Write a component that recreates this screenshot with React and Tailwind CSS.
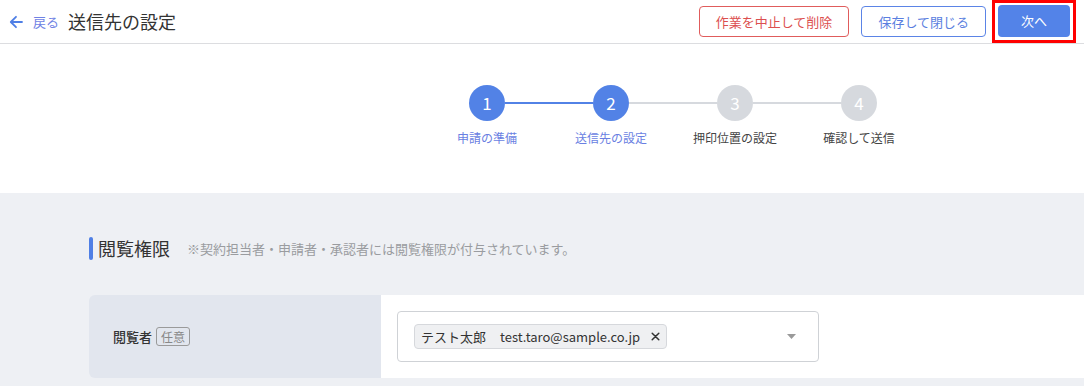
const steps = [
  { n: 1, label: "申請の準備", done: true },
  { n: 2, label: "送信先の設定", done: true },
  { n: 3, label: "押印位置の設定", done: false },
  { n: 4, label: "確認して送信", done: false },
];

function Header() {
  return (
    <header className="h-[44px] flex items-center justify-between border-b border-[#dcdde0] bg-white">
      <div className="flex items-center pl-[9px]">
        <svg width="14" height="14" viewBox="0 0 14 14" fill="none" className="mr-[10px]">
          <path d="M13 7H2M7 1.8L1.8 7 7 12.2" stroke="#4f7fe5" strokeWidth="1.8" strokeLinecap="round" strokeLinejoin="round" />
        </svg>
        <span className="text-[13px] text-[#6f82e4] mr-[9px]">戻る</span>
        <h1 className="text-[18px] text-[#333]">送信先の設定</h1>
      </div>
      <div className="flex items-center h-full">
        <button className="h-[31px] px-[16px] rounded-[4px] border border-[#e05c5c] text-[13px] text-[#dc4f4f] bg-white">
          作業を中止して削除
        </button>
        <button className="ml-[12px] h-[31px] px-[16px] rounded-[4px] border border-[#5b84e6] text-[13px] text-[#5b7fe0] bg-white">
          保存して閉じる
        </button>
        <div className="ml-[6px] mr-[8px] h-[43px] w-[84px] border-[3px] border-[#ff0000] p-[3px] pt-[2px]">
          <button className="w-full h-[32px] rounded-[4px] bg-[#5383e8] text-[13px] text-white">次へ</button>
        </div>
      </div>
    </header>
  );
}

function Stepper() {
  return (
    <section className="h-[149px] bg-white pt-[41px]">
      <div className="flex items-center ml-[469px]">
        {steps.map((s, i) => (
          <div key={s.n} className="flex items-center">
            <div
              className={`w-[36px] h-[36px] rounded-full flex items-center justify-center text-[17px] text-white ${
                s.done ? "bg-[#5282e6]" : "bg-[#d6d9de]"
              }`}
            >
              {s.n}
            </div>
            {i < steps.length - 1 && (
              <div className={`w-[88px] h-[2px] ${steps[i + 1].done ? "bg-[#5282e6]" : "bg-[#d6d9de]"}`} />
            )}
          </div>
        ))}
      </div>
      <div className="grid grid-cols-4 w-[496px] ml-[425px] mt-[8px]">
        {steps.map((s) => (
          <div key={s.n} className={`text-center text-[12px] ${s.done ? "text-[#6a7fe2]" : "text-[#444]"}`}>
            {s.label}
          </div>
        ))}
      </div>
    </section>
  );
}

function Viewers() {
  return (
    <section className="bg-[#eef0f4] pt-[44px] pb-[8px] pl-[89px]">
      <div className="flex items-center h-[23px]">
        <div className="w-[4px] h-[23px] rounded-[2px] bg-[#4f7fe5]" />
        <h2 className="ml-[5px] text-[18px] text-[#333]">閲覧権限</h2>
        <p className="ml-[17px] text-[13px] text-[#9a9ca0]">※契約担当者・申請者・承認者には閲覧権限が付与されています。</p>
      </div>
      <div className="mt-[35px] flex h-[83px] rounded-l-[6px] overflow-hidden">
        <div className="w-[292px] bg-[#e2e6ee] flex items-center pl-[24px]">
          <span className="text-[13px] font-medium text-[#333]">閲覧者</span>
          <span className="ml-[4px] px-[4px] h-[19px] leading-[17px] rounded-[3px] border border-[#9a9a9a] text-[12px] text-[#888]">任意</span>
        </div>
        <div className="flex-1 bg-white pl-[16px] pt-[16px]">
          <div className="w-[422px] h-[51px] rounded-[4px] border border-[#cfd2d6] flex items-center pl-[16px] pr-[22px]">
            <div className="h-[25px] flex items-center rounded-[4px] border border-[#d6d8dc] bg-[#eff0f2] pl-[6px] pr-[6px] text-[13px] text-[#333]">
              <span>テスト太郎</span>
              <span className="ml-[14px]">test.taro@sample.co.jp</span>
              <svg width="9" height="9" viewBox="0 0 9 9" className="ml-[11px]">
                <path d="M1.2 1.2l6.6 6.6M7.8 1.2L1.2 7.8" stroke="#333" strokeWidth="1.5" strokeLinecap="round" />
              </svg>
            </div>
            <svg width="9" height="5" viewBox="0 0 9 5" className="ml-auto">
              <path d="M0 0h9L4.5 5z" fill="#9a9a9a" />
            </svg>
          </div>
        </div>
      </div>
    </section>
  );
}

export default function App() {
  return (
    <div className="w-[1084px] h-[386px] overflow-hidden bg-white font-['Noto_Sans_CJK_JP','Noto_Sans',sans-serif]">
      <Header />
      <Stepper />
      <Viewers />
    </div>
  );
}
